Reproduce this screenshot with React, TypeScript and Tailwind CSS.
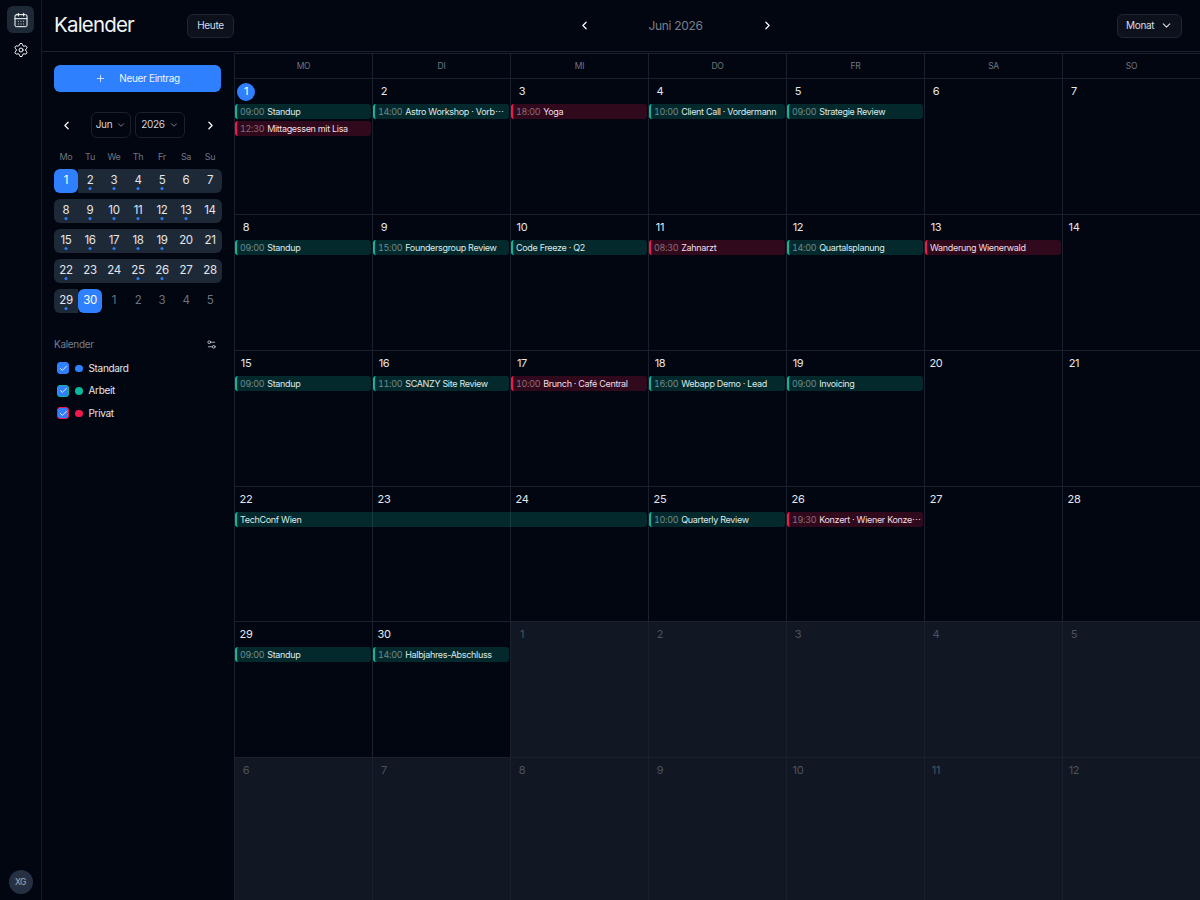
import React from "react";
import { CalendarDays, Settings, ChevronLeft, ChevronRight, ChevronDown, Plus, Check, Settings2 } from "lucide-react";

type Ev = { t?: string; n: string; c: "g" | "r"; span?: boolean };
const E: Record<string, Ev[]> = {
  "0-0": [{ t: "09:00", n: "Standup", c: "g" }, { t: "12:30", n: "Mittagessen mit Lisa", c: "r" }],
  "0-1": [{ t: "14:00", n: "Astro Workshop · Vorb⋯", c: "g" }],
  "0-2": [{ t: "18:00", n: "Yoga", c: "r" }],
  "0-3": [{ t: "10:00", n: "Client Call · Vordermann", c: "g" }],
  "0-4": [{ t: "09:00", n: "Strategie Review", c: "g" }],
  "1-0": [{ t: "09:00", n: "Standup", c: "g" }],
  "1-1": [{ t: "15:00", n: "Foundersgroup Review", c: "g" }],
  "1-2": [{ n: "Code Freeze · Q2", c: "g" }],
  "1-3": [{ t: "08:30", n: "Zahnarzt", c: "r" }],
  "1-4": [{ t: "14:00", n: "Quartalsplanung", c: "g" }],
  "1-5": [{ n: "Wanderung Wienerwald", c: "r" }],
  "2-0": [{ t: "09:00", n: "Standup", c: "g" }],
  "2-1": [{ t: "11:00", n: "SCANZY Site Review", c: "g" }],
  "2-2": [{ t: "10:00", n: "Brunch · Café Central", c: "r" }],
  "2-3": [{ t: "16:00", n: "Webapp Demo · Lead", c: "g" }],
  "2-4": [{ t: "09:00", n: "Invoicing", c: "g" }],
  "3-0": [{ n: "TechConf Wien", c: "g", span: true }],
  "3-3": [{ t: "10:00", n: "Quarterly Review", c: "g" }],
  "3-4": [{ t: "19:30", n: "Konzert · Wiener Konze⋯", c: "r" }],
  "4-0": [{ t: "09:00", n: "Standup", c: "g" }],
  "4-1": [{ t: "14:00", n: "Halbjahres-Abschluss", c: "g" }],
};

const weeks: number[][] = [
  [1, 2, 3, 4, 5, 6, 7],
  [8, 9, 10, 11, 12, 13, 14],
  [15, 16, 17, 18, 19, 20, 21],
  [22, 23, 24, 25, 26, 27, 28],
  [29, 30, 1, 2, 3, 4, 5],
  [6, 7, 8, 9, 10, 11, 12],
];

const dots = new Set([2, 3, 4, 5, 8, 9, 10, 11, 12, 13, 15, 16, 17, 18, 19, 22, 25, 26, 29]);

function EventBar({ e }: { e: Ev }) {
  const green = e.c === "g";
  return (
    <div
      className={`h-[15px] flex items-center rounded-[3px] border-l-2 pl-[3px] pr-[3px] text-[9px] leading-[15px] whitespace-nowrap ${
        green ? "bg-[#0bb89c]/20 border-[#0bb89c]" : "bg-[#f0184f]/20 border-[#f0184f]"
      } ${e.span ? "w-[412px] relative z-10" : "w-full"}`}
    >
      {e.t && <span className={`mr-[3px] shrink-0 tabular-nums ${green ? "text-[#6f8a8c]" : "text-[#8c6a78]"}`}>{e.t}</span>}
      <span className={`${green ? "text-[#dfe9e9]" : "text-[#f0dfe4]"}`}>{e.n}</span>
    </div>
  );
}

function MiniWeek({ w, i }: { w: number[]; i: number }) {
  return (
    <div className="grid grid-cols-7 h-6 w-[168px]">
      {w.map((d, j) => {
        const out = i === 4 && j >= 2;
        const sel = (i === 0 && j === 0) || (i === 4 && j === 1);
        const lastInRange = i === 4 ? j === 0 : j === 6;
        return (
          <div
            key={j}
            className={`relative flex items-center justify-center pb-px text-[11.5px] ${
              sel
                ? "bg-[#2f80ff] text-white rounded-md z-10"
                : out
                ? "text-[#6b7380]"
                : `bg-[#1e2938] text-[#e5e7eb] ${j === 0 ? "rounded-l-md" : ""} ${lastInRange && i !== 4 ? "rounded-r-md" : ""}`
            }`}
          >
            {d}
            {!out && !sel && dots.has(d) && (
              <span className="absolute bottom-[3px] left-1/2 -translate-x-1/2 w-[3px] h-[3px] rounded-full bg-[#2f80ff]" />
            )}
          </div>
        );
      })}
    </div>
  );
}

function Filter({ label, dot, border }: { label: string; dot: string; border: string }) {
  return (
    <div className="flex items-center h-[22.5px] pl-[3px]">
      <span className={`w-3 h-3 rounded-[3px] bg-[#2f80ff] border flex items-center justify-center ${border}`}>
        <Check size={9} strokeWidth={2.25} className="text-white" />
      </span>
      <span className={`w-[7.5px] h-[7.5px] rounded-full ml-[6px] ${dot}`} />
      <span className="ml-[6px] text-[10px] text-[#e5e7eb]">{label}</span>
    </div>
  );
}

export default function App() {
  return (
    <div className="flex h-[900px] w-[1200px] overflow-hidden bg-[#020611] text-white font-['Inter',sans-serif] tracking-[-0.02em]">
      <aside className="w-[42px] shrink-0 border-r border-[#141a26] flex flex-col items-center pt-[6px] pb-[6px]">
        <div className="w-[27px] h-[27px] rounded-md bg-[#1e2938] flex items-center justify-center">
          <CalendarDays size={16} strokeWidth={1.5} className="text-white" />
        </div>
        <div className="w-[27px] h-[27px] mt-[3px] flex items-center justify-center">
          <Settings size={16} strokeWidth={1.5} className="text-white" />
        </div>
        <div className="mt-auto w-6 h-6 rounded-full bg-[#253143] flex items-center justify-center text-[8.5px] text-[#aab2bf]">XG</div>
      </aside>

      <div className="flex-1 flex flex-col min-w-0">
        <header className="h-[52px] shrink-0 border-b border-[#1a202c] flex items-center pl-3 pr-[18px]">
          <h1 className="text-[20.5px] font-normal tracking-[-0.04em] text-[#f3f4f6] w-[133px]">Kalender</h1>
          <button className="h-6 w-[47px] rounded-md border border-[#1f2633] bg-[#0c111c] text-[10px] text-[#d9dde3]">Heute</button>
          <div className="flex-1 flex items-center justify-center">
            <ChevronLeft size={13} strokeWidth={2.25} className="text-white" />
            <span className="w-[170px] text-center text-[12px] text-[#79808d]">Juni 2026</span>
            <ChevronRight size={13} strokeWidth={2.25} className="text-white" />
          </div>
          <button className="h-6 w-[65px] pl-2 pr-2 rounded-md border border-[#1f2633] bg-[#0c111c] text-[10px] text-[#d9dde3] flex items-center justify-between">
            Monat
            <ChevronDown size={13} strokeWidth={2} className="text-[#d9dde3]" />
          </button>
        </header>

        <div className="flex-1 flex min-h-0">
          <section className="w-[192px] shrink-0 px-3 pt-[13px]">
            <button className="w-[167px] h-[27px] rounded-md bg-[#2f80ff] flex items-center justify-center gap-[13px] text-[10px] text-[#eef4ff]">
              <Plus size={11} strokeWidth={1.75} />
              Neuer Eintrag
            </button>

            <div className="flex items-center mt-[20px] h-[26px] w-[168px]">
              <ChevronLeft size={13} strokeWidth={2.25} className="text-white ml-[6px]" />
              <div className="ml-[18px] w-10 h-[26px] pb-px rounded-md border border-[#1a202c] flex items-center justify-center gap-1 text-[10px] text-[#d1d5db]">
                Jun
                <ChevronDown size={10} className="text-[#8a919c]" />
              </div>
              <div className="ml-1 w-[50px] h-[26px] pb-px rounded-md border border-[#1a202c] flex items-center justify-center gap-1 text-[10px] text-[#d1d5db]">
                2026
                <ChevronDown size={10} className="text-[#8a919c]" />
              </div>
              <ChevronRight size={13} strokeWidth={2.25} className="text-white ml-auto mr-[5px]" />
            </div>

            <div className="grid grid-cols-7 w-[168px] mt-[11px] h-[15px] items-center text-center text-[9px] text-[#6f7682]">
              {["Mo", "Tu", "We", "Th", "Fr", "Sa", "Su"].map((d) => (
                <span key={d}>{d}</span>
              ))}
            </div>
            <div className="flex flex-col gap-[6px] mt-[5px]">
              {weeks.slice(0, 5).map((w, i) => (
                <MiniWeek key={i} w={w} i={i} />
              ))}
            </div>

            <div className="mt-[23px] flex items-center justify-between w-[168px] pr-[5px] h-4">
              <span className="text-[10px] text-[#777e8a]">Kalender</span>
              <Settings2 size={11} strokeWidth={1.75} className="text-[#d1d5db]" />
            </div>
            <div className="mt-[5px]">
              <Filter label="Standard" dot="bg-[#2f80ff]" border="border-[#2f80ff]" />
              <Filter label="Arbeit" dot="bg-[#0bb89c]" border="border-[#0bb89c]" />
              <Filter label="Privat" dot="bg-[#f0184f]" border="border-[#f0184f]" />
            </div>
          </section>

          <main className="flex-1 flex flex-col min-w-0 mt-px border-t border-[#1a202c]">
            <div className="grid grid-cols-7 h-[24px] shrink-0">
              {["MO", "DI", "MI", "DO", "FR", "SA", "SO"].map((d) => (
                <div key={d} className="flex items-center justify-center pt-px text-[8.5px] text-[#6f7682] border-l border-[#1a202c]">
                  {d}
                </div>
              ))}
            </div>
            <div className="flex-1 grid grid-rows-[136px_136px_136px_135px_136px_1fr] min-h-0">
              {weeks.map((w, i) => (
                <div key={i} className="grid grid-cols-7 border-t border-[#1a202c]">
                  {w.map((d, j) => {
                    const out = (i === 4 && j >= 2) || i === 5;
                    const today = i === 0 && j === 0;
                    const evs = E[`${i}-${j}`] ?? [];
                    return (
                      <div key={j} className={`pr-[1.5px] min-w-0 border-l border-[#1a202c] ${out ? "bg-[#111823]" : ""}`}>
                        <div className="h-[25px] flex items-center pl-[2px]">
                          <span
                            className={`w-[18px] h-[18px] flex items-center justify-center rounded-full text-[11px] ${
                              today ? "bg-[#2f80ff] text-white" : out ? "text-[#4b5360]" : "text-[#e5e7eb]"
                            }`}
                          >
                            {d}
                          </span>
                        </div>
                        <div className="flex flex-col gap-[2px]">
                          {evs.map((e, k) => (
                            <EventBar key={k} e={e} />
                          ))}
                        </div>
                      </div>
                    );
                  })}
                </div>
              ))}
            </div>
          </main>
        </div>
      </div>
    </div>
  );
}
